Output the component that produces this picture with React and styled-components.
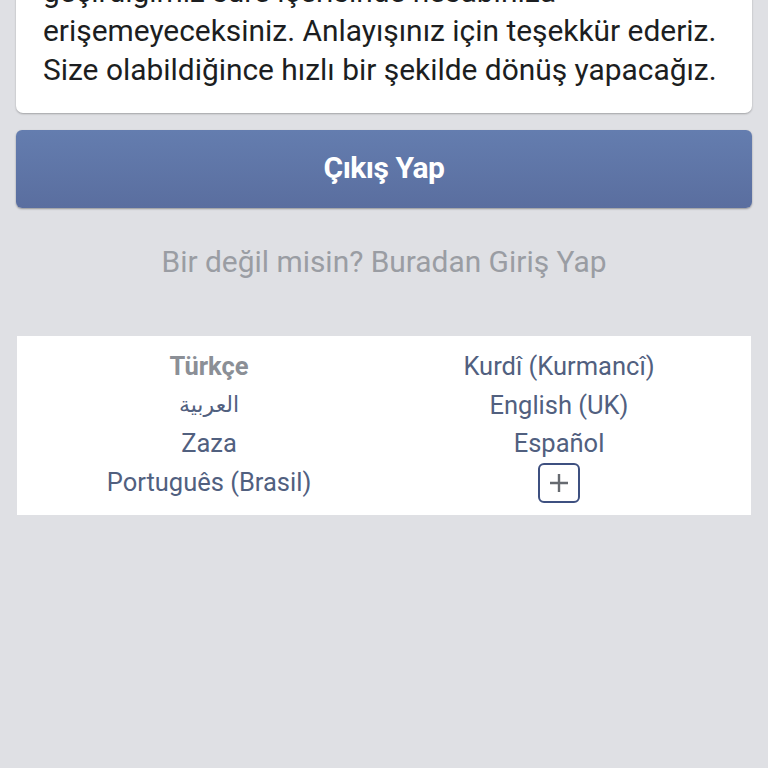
import React from "react";
import styled, { createGlobalStyle } from "styled-components";

const GlobalStyle = createGlobalStyle`
  html, body {
    margin: 0;
    padding: 0;
    background: #dfe0e4;
    font-family: Roboto, "DejaVu Sans", sans-serif;
  }
  body {
    overflow: hidden;
    height: 768px;
  }
`;

const Page = styled.div`
  display: flex;
  flex-direction: column;
  padding: 0 16px;
`;

const Card = styled.div`
  margin-top: -48px;
  background: #fff;
  border-radius: 0 0 7px 7px;
  box-shadow: 0 1px 2px rgba(0, 0, 0, 0.28);
  padding: 20px 26px 24px 27px;
`;

const Line = styled.div`
  font-size: 29.9px;
  line-height: 39px;
  color: #1c1e21;
  white-space: nowrap;
`;

const LogoutButton = styled.button`
  margin-top: 17px;
  height: 78px;
  padding: 0 0 4px;
  border: none;
  border-radius: 6px;
  background: linear-gradient(#647daf, #5a6e9f);
  box-shadow: 0 1px 2px rgba(0, 0, 0, 0.35);
  color: #fff;
  font-family: Roboto, sans-serif;
  font-weight: 700;
  font-size: 30px;
  letter-spacing: -0.5px;
`;

const SwitchLink = styled.div`
  margin-top: 36px;
  text-align: center;
  font-size: 29.9px;
  line-height: 36px;
  color: #9a9da3;
`;

const LangPanel = styled.div`
  margin-top: 56px;
  background: #fff;
  padding: 11px 17px 13px;
  display: grid;
  grid-template-columns: 1fr 1fr;
  margin-left: 1px;
  margin-right: 1px;
`;

const LangItem = styled.div`
  text-align: center;
  font-size: 25.5px;
  line-height: 38.7px;
  height: 38.7px;
  color: ${(p) => (p.$active ? "#8b8f96" : "#51607f")};
  font-weight: ${(p) => (p.$active ? 700 : 400)};
  display: flex;
  justify-content: center;
  align-items: center;
`;

const Arabic = styled.span`
  font-size: 22px;
`;

const MoreBox = styled.div`
  width: 38px;
  height: 36px;
  border: 2px solid #3e5080;
  border-radius: 6px;
  display: flex;
  align-items: center;
  justify-content: center;
  margin-top: 1px;
`;

const PlusIcon = () => (
  <svg width="22" height="22" viewBox="0 0 22 22">
    <path d="M11 2v18M2 11h18" stroke="#666a70" strokeWidth="2.4" />
  </svg>
);

export default function App() {
  return (
    <>
      <GlobalStyle />
      <Page>
        <Card>
          <Line>geçirdiğimiz süre içerisinde hesabınıza</Line>
          <Line>erişemeyeceksiniz. Anlayışınız için teşekkür ederiz.</Line>
          <Line>Size olabildiğince hızlı bir şekilde dönüş yapacağız.</Line>
        </Card>
        <LogoutButton>Çıkış Yap</LogoutButton>
        <SwitchLink>Bir değil misin? Buradan Giriş Yap</SwitchLink>
        <LangPanel>
          <LangItem $active>Türkçe</LangItem>
          <LangItem>Kurdî (Kurmancî)</LangItem>
          <LangItem>
            <Arabic>العربية</Arabic>
          </LangItem>
          <LangItem>English (UK)</LangItem>
          <LangItem>Zaza</LangItem>
          <LangItem>Español</LangItem>
          <LangItem>Português (Brasil)</LangItem>
          <LangItem>
            <MoreBox>
              <PlusIcon />
            </MoreBox>
          </LangItem>
        </LangPanel>
      </Page>
    </>
  );
}
